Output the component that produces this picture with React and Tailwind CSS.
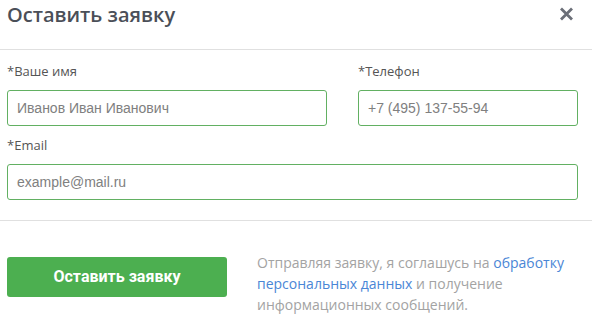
import React from 'react';

const openSans = { fontFamily: '"Open Sans", "Noto Sans", sans-serif' };

function Field({ label, value, className = '' }) {
  return (
    <div className={className}>
      <div className="h-5 leading-5 text-[13px] text-[#555]" style={openSans}>
        {label}
      </div>
      <div className="mt-[9px] h-9 rounded-[3px] border border-[#62b062] pl-[9px] flex items-center text-[14px] text-[#808080] font-['Liberation_Sans',Arial,sans-serif]">
        {value}
      </div>
    </div>
  );
}

export default function App() {
  return (
    <div className="w-[592px] bg-white" style={openSans}>
      <div className="h-[50px] border-b border-[#e0e0e0] pl-[7px] pr-[18px] flex items-start justify-between">
        <h1 className="text-[20px] leading-7 pt-px font-semibold text-[#4b4f58]">Оставить заявку</h1>
        <svg className="mt-[7px]" width="15" height="14" viewBox="0 0 15 14">
          <path d="M2 1.5 L13 12.5 M13 1.5 L2 12.5" stroke="#6b6f78" strokeWidth="2.8" strokeLinecap="butt" />
        </svg>
      </div>

      <div className="pl-[7px] pr-[14px] pt-[11px] pb-5 border-b border-[#e0e0e0]">
        <div className="grid grid-cols-[320px_220px] gap-x-[31px]">
          <Field label="*Ваше имя" value="Иванов Иван Иванович" />
          <Field label="*Телефон" value="+7 (495) 137-55-94" />
        </div>
        <Field className="mt-[9px]" label="*Email" value="example@mail.ru" />
      </div>

      <div className="pl-[7px] pt-[31px] flex items-start gap-[30px]">
        <button className="mt-[5px] w-[220px] h-10 rounded-[3px] bg-[#4caf50] text-white text-[16px] font-bold font-['Roboto',sans-serif]">
          Оставить заявку
        </button>
        <p className="w-[320px] text-[14px] leading-[21px] text-[#a3a3a3]">
          Отправляя заявку, я соглашусь на{' '}
          <a className="text-[#4a86d6]">обработку персональных данных</a> и получение информационных сообщений.
        </p>
      </div>
    </div>
  );
}
